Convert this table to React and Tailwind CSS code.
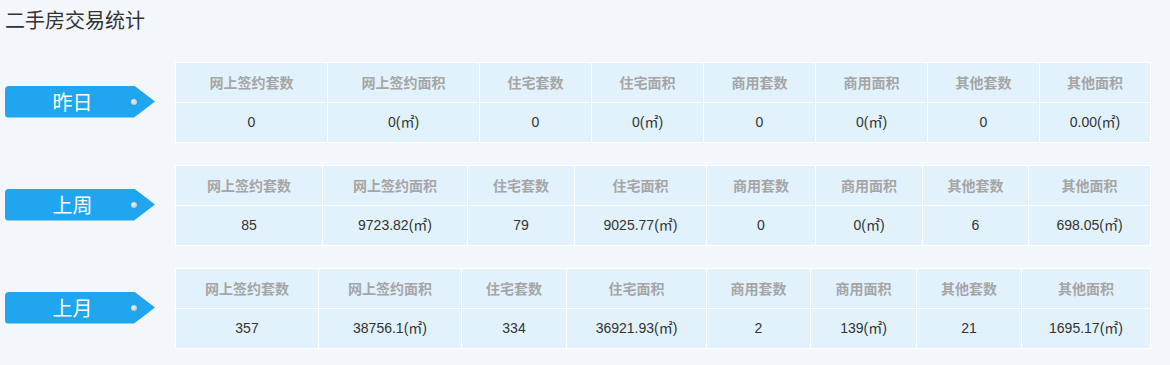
import React from "react";

const HEAD = ["网上签约套数", "网上签约面积", "住宅套数", "住宅面积", "商用套数", "商用面积", "其他套数", "其他面积"];

const ROWS = [
  {
    label: "昨日",
    cols: "grid-cols-[151px_151px_111px_111px_111px_111px_111px_110px]",
    data: ["0", "0(㎡)", "0", "0(㎡)", "0", "0(㎡)", "0", "0.00(㎡)"],
  },
  {
    label: "上周",
    cols: "grid-cols-[146px_144px_106px_131px_108px_106px_105px_121px]",
    data: ["85", "9723.82(㎡)", "79", "9025.77(㎡)", "0", "0(㎡)", "6", "698.05(㎡)"],
  },
  {
    label: "上月",
    cols: "grid-cols-[142px_142px_104px_139px_103px_105px_104px_128px]",
    data: ["357", "38756.1(㎡)", "334", "36921.93(㎡)", "2", "139(㎡)", "21", "1695.17(㎡)"],
  },
];

function Label({ text }) {
  return (
    <div className="relative w-[150px] h-[32px] mb-[2px] shrink-0 bg-[#1fa6ef] rounded-l-[4px] [clip-path:polygon(0_0,129px_0,100%_50%,129px_100%,0_100%)] flex items-center">
      <span className="w-[129px] pl-[6px] text-center text-white text-[20px] leading-none font-['Noto_Sans_CJK_SC',sans-serif]">
        {text}
      </span>
      <span className="absolute left-[126px] top-[13px] w-[6px] h-[6px] rounded-full bg-[radial-gradient(circle_at_40%_40%,#f4f4f4_0%,#c2c6ca_70%,#9aa2aa_100%)]" />
    </div>
  );
}

function Table({ cols, data }) {
  return (
    <div className={`grid ${cols} w-[976px] bg-white p-px gap-px`}>
      {HEAD.map((h) => (
        <div
          key={h}
          className="h-[39px] bg-[#e1f2fd] flex items-center justify-center text-[14px] font-bold text-[#a5a5a5] font-['Noto_Sans_CJK_SC',sans-serif]"
        >
          {h}
        </div>
      ))}
      {data.map((d, i) => (
        <div
          key={i}
          className="h-[39px] bg-[#e1f2fd] flex items-center justify-center text-[14px] text-[#333333] font-['Liberation_Sans','Noto_Sans_CJK_SC',sans-serif]"
        >
          {d}
        </div>
      ))}
    </div>
  );
}

export default function App() {
  return (
    <div className="w-[1170px] h-[365px] bg-[#f3f7fb] pl-[5px] overflow-hidden">
      <div className="h-[40px] flex items-center text-[20px] text-[#333333] font-['Noto_Sans_CJK_SC',sans-serif]">
        二手房交易统计
      </div>
      <div className="mt-[22px] flex flex-col gap-[22px]">
        {ROWS.map((r) => (
          <div key={r.label} className="flex items-center gap-[20px]">
            <Label text={r.label} />
            <Table cols={r.cols} data={r.data} />
          </div>
        ))}
      </div>
    </div>
  );
}
